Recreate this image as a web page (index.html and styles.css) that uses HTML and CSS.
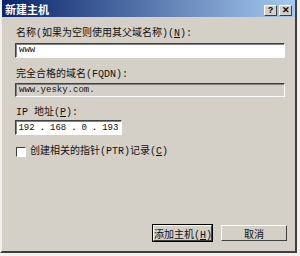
FILE: index.html
```html
<!DOCTYPE html>
<html lang="zh-CN">
<head>
    <meta charset="UTF-8">
    <title>新建主机</title>
    <link rel="stylesheet" href="styles.css">
</head>
<body>
    <div class="dialog">
        <div class="titlebar">
            <span class="title">新建主机</span>
            <div class="title-buttons">
                <span class="tbtn">?</span>
                <span class="tbtn">&#x2715;</span>
            </div>
        </div>
        <div class="content">
            <label class="label">名称(如果为空则使用其父域名称)(<u>N</u>):</label>
            <div class="field">www</div>
            <label class="label fqdn">完全合格的域名(FQDN):</label>
            <div class="field readonly">www.yesky.com.</div>
            <label class="label ip-label">IP 地址(<u>P</u>):</label>
            <div class="ip">
                <span>192</span><span class="dot">.</span>
                <span>168</span><span class="dot">.</span>
                <span>0</span><span class="dot">.</span>
                <span>193</span>
            </div>
            <div class="check-row">
                <span class="checkbox"></span>
                <span>创建相关的指针(PTR)记录(<u>C</u>)</span>
            </div>
            <div class="actions">
                <button class="default">添加主机(<u>H</u>)</button>
                <button>取消</button>
            </div>
        </div>
    </div>
</body>
</html>
```

FILE: styles.css
```css
* {
    box-sizing: border-box;
    margin: 0;
    padding: 0;
}
body {
    width: 300px;
    height: 256px;
    background: #f4f2ee;
    font-family: "Liberation Mono", "Noto Sans CJK SC", monospace;
    font-size: 10px;
    color: #111;
}
.dialog {
    width: 297px;
    height: 253px;
    background: #d4d0c8;
    border-left: 2px solid #f2f0ec;
    border-right: 2px solid #404040;
    border-bottom: 2px solid #404040;
    display: flex;
    flex-direction: column;
}
.titlebar {
    height: 17px;
    background: linear-gradient(to right, #0a246a, #a6caf0);
    display: flex;
    align-items: center;
    justify-content: space-between;
    padding: 0 3px 0 3px;
}
.title {
    color: white;
    font-weight: bold;
    font-size: 11px;
    font-family: "Noto Sans CJK SC", sans-serif;
}
.title-buttons {
    display: flex;
    gap: 2px;
    margin-top: 3px;
}
.tbtn {
    width: 13px;
    height: 11px;
    background: #d4d0c8;
    border: 1px solid;
    border-color: #fff #404040 #404040 #fff;
    font-family: "Liberation Sans", sans-serif;
    font-size: 9px;
    font-weight: bold;
    line-height: 9px;
    text-align: center;
    color: #000;
}
.content {
    flex: 1;
    display: flex;
    flex-direction: column;
    padding: 10px 8px 10px 13px;
}
.label {
    height: 13px;
    line-height: 13px;
    padding-left: 1px;
}
.label.fqdn {
    margin-top: 10px;
}
.label.ip-label {
    margin-top: 9px;
}
.field {
    margin-top: 3px;
    height: 15px;
    width: 270px;
    background: white;
    border: 1px solid;
    border-color: #404040 #fff #fff #404040;
    box-shadow: inset 1px 1px 0 #808080;
    padding: 0 3px;
    line-height: 12px;
    font-size: 9px;
}
.field.readonly {
    margin-top: 2px;
    height: 14px;
    background: #d4d0c8;
}
.ip {
    margin-top: 1px;
    width: 107px;
    height: 15px;
    background: white;
    border: 1px solid;
    border-color: #404040 #fff #fff #404040;
    box-shadow: inset 1px 1px 0 #808080;
    display: flex;
    justify-content: space-around;
    align-items: center;
    font-size: 9px;
}
.dot {
    font-weight: bold;
}
.check-row {
    margin-top: 11px;
    height: 11px;
    line-height: 11px;
    display: flex;
    align-items: center;
    gap: 4px;
    padding-left: 1px;
}
.checkbox {
    width: 10px;
    height: 10px;
    background: white;
    border: 1px solid;
    border-color: #404040 #fff #fff #404040;
}
.actions {
    margin-top: auto;
    display: flex;
    justify-content: flex-end;
    gap: 9px;
}
button {
    width: 66px;
    height: 16px;
    padding: 0;
    white-space: nowrap;
    background: #d4d0c8;
    border: 1px solid;
    border-color: #fff #404040 #404040 #fff;
    font-family: "Liberation Mono", "Noto Sans CJK SC", monospace;
    font-size: 10px;
    color: #111;
}
button.default {
    width: 59px;
    outline: 1px solid #000;
}
```
